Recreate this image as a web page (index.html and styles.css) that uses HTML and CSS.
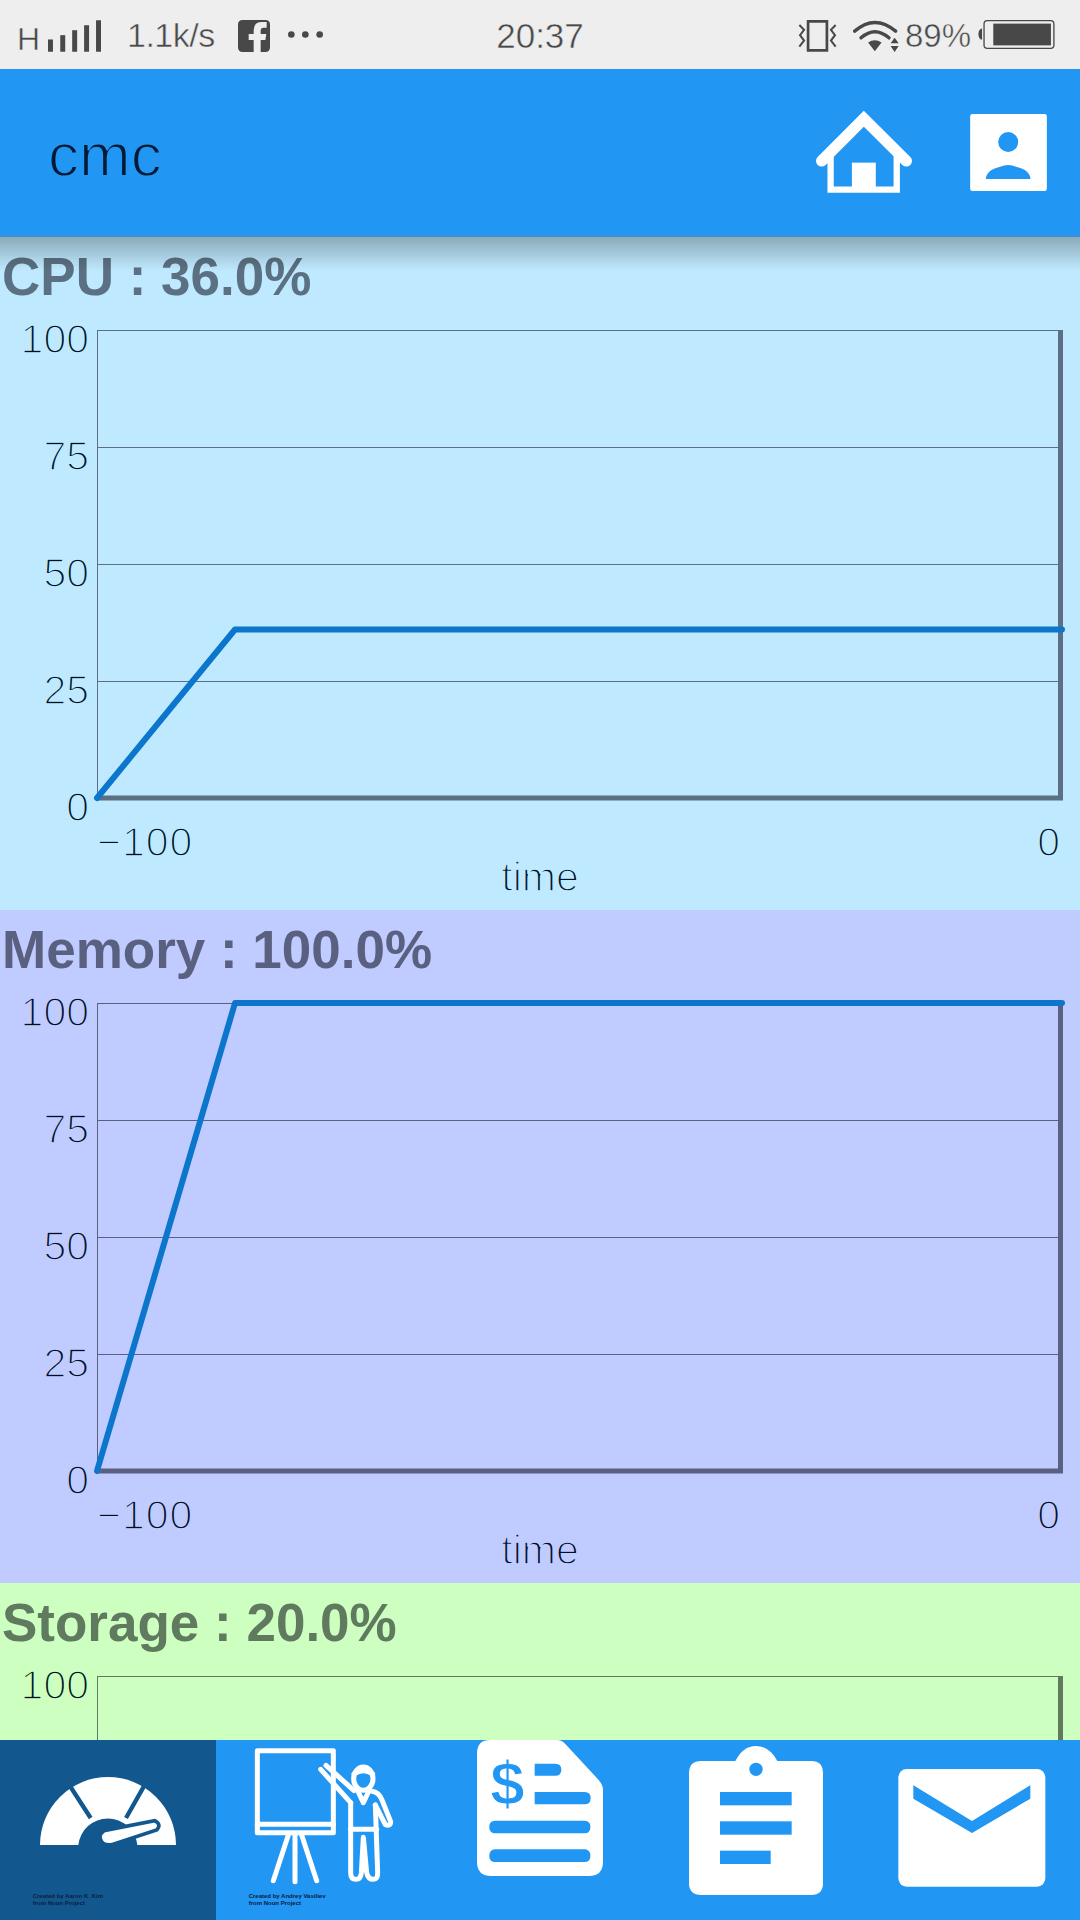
FILE: index.html
```html
<!DOCTYPE html>
<html lang="en">
<head>
<meta charset="utf-8">
<title>cmc</title>
<link rel="stylesheet" href="styles.css">
</head>
<body>
<div class="app">
  <div class="status">
    <div class="status-left">
      <span class="net">H</span>
      <svg class="ic-signal" viewBox="143 55 160 95"><rect x="143" y="113" width="15" height="37"/><rect x="180" y="100" width="15" height="50"/><rect x="216" y="85" width="15" height="65"/><rect x="252" y="70" width="15" height="80"/><rect x="288" y="55" width="15" height="95"/></svg>
      <span class="speed">1.1k/s</span>
      <svg class="ic-fb" viewBox="708 57 96 96"><path d="M722 57H790Q804 57 804 71V139Q804 153 790 153H776V117H790L793 99H776V89Q776 80 785 80H794V63H780Q755 63 755 88V99H740V117H755V153H722Q708 153 708 139V71Q708 57 722 57Z"/></svg>
      <svg class="ic-dots" viewBox="858 93 105 20"><circle cx="868" cy="103" r="10"/><circle cx="910" cy="103" r="10"/><circle cx="953" cy="103" r="10"/></svg>
    </div>
    <div class="clock">20:37</div>
    <div class="status-right">
      <svg class="ic-vib" viewBox="62 55 116 95"><path class="vib-o" d="M92 59H148V145H92Z"/><path class="vib-l" d="M66 70L80 84L68 100L80 116L66 134M174 70L160 84L172 100L160 116L174 134"/></svg>
      <svg class="ic-wifi" viewBox="225 55 137 95"><path class="wifi-l" d="M230 88Q290 36 352 88M249 108Q290 72 332 108"/><path d="M270 122Q290 108 310 122L290 148Z"/><path d="M349 108L361 124H337ZM349 150L337 132H361Z"/></svg>
      <span class="batt-pct">89%</span>
      <svg class="ic-batt" viewBox="597 58 231 88"><rect class="batt-o" x="614" y="60" width="212" height="84" rx="10"/><rect x="642" y="69" width="175" height="66"/><path d="M608 84V118Q597 116 597 101Q597 86 608 84Z"/></svg>
    </div>
  </div>

  <header class="bar">
    <h1 class="bar-title">cmc</h1>
    <div class="bar-actions">
      <svg class="ic-home" viewBox="105 65 295 250"><path class="home-roof" d="M125 217L252 90L380 217"/><path class="home-wall" d="M152 190V303H351V190"/><rect class="home-door" x="216" y="222" width="72" height="80"/></svg>
      <svg class="ic-user" viewBox="570 72 230 231"><rect class="user-bg" x="570" y="72" width="230" height="231" rx="7"/><circle class="user-fg" cx="684" cy="156" r="30"/><path class="user-fg" d="M617 267Q618 240 660 230Q684 220 708 230Q750 240 751 267Z"/></svg>
    </div>
  </header>

  <main class="content">
    <section class="panel panel-cpu">
      <h2 class="panel-title">CPU : 36.0%</h2>
      <svg class="chart" viewBox="0 -10 1080 603">
        <path class="grid" d="M97 13.5H1060M97 130.5H1060M97 247.5H1060M97 364.5H1060M97.5 13V481"/>
        <path class="axis" d="M1060.5 13V483M97 481H1063"/>
        <polyline class="series" points="97,481 235,312.5 1062,312.5"/>
        <g class="ylab"><text x="89" y="36">100</text><text x="89" y="153">75</text><text x="89" y="270">50</text><text x="89" y="387">25</text><text x="89" y="504">0</text></g>
        <text class="xlab wide" x="97" y="539">−100</text><text class="xlab end" x="1060" y="539">0</text><text class="xlab mid" x="540" y="574">time</text>
      </svg>
    </section>
    <section class="panel panel-mem">
      <h2 class="panel-title">Memory : 100.0%</h2>
      <svg class="chart" viewBox="0 -10 1080 603">
        <path class="grid" d="M97 13.5H1060M97 130.5H1060M97 247.5H1060M97 364.5H1060M97.5 13V481"/>
        <path class="axis" d="M1060.5 13V483M97 481H1063"/>
        <polyline class="series" points="97,481 235,13 1062,13"/>
        <g class="ylab"><text x="89" y="36">100</text><text x="89" y="153">75</text><text x="89" y="270">50</text><text x="89" y="387">25</text><text x="89" y="504">0</text></g>
        <text class="xlab wide" x="97" y="539">−100</text><text class="xlab end" x="1060" y="539">0</text><text class="xlab mid" x="540" y="574">time</text>
      </svg>
    </section>
    <section class="panel panel-sto">
      <h2 class="panel-title">Storage : 20.0%</h2>
      <svg class="chart" viewBox="0 -10 1080 603">
        <path class="grid" d="M97 13.5H1060M97 130.5H1060M97 247.5H1060M97 364.5H1060M97.5 13V481"/>
        <path class="axis" d="M1060.5 13V483M97 481H1063"/>
        <g class="ylab"><text x="89" y="36">100</text></g>
      </svg>
    </section>
  </main>

  <nav class="tabs">
    <div class="tab tab-active">
      <svg class="tab-ic" viewBox="0 30 648 540">
        <path class="w" d="M120 345A204 204 0 0 1 528 345H412A89 89 0 0 0 235 345Z"/>
        <path class="sep" d="M206 162L272 264M438 158L378 264"/>
        <path class="needle" d="M312 302L464 272Q486 283 470 300L335 344Q303 348 300 322Q300 310 312 302Z"/>
        <text class="credit" x="98" y="505">Created by Aaron K. Kim</text>
        <text class="credit" x="98" y="526">from Noun Project</text>
      </svg>
    </div>
    <div class="tab">
      <svg class="tab-ic" viewBox="648 30 648 540">
        <g class="line">
          <rect x="772" y="62" width="228" height="246"/>
          <path d="M772 283H1000"/>
          <path d="M865 315L820 452M885 315V455M905 315L950 452"/>
          <ellipse cx="1090" cy="146" rx="29" ry="35"/>
          <path d="M1062 132Q1090 112 1118 132M1072 180L1090 218L1108 180"/>
          <path d="M962 118L1052 218M978 106L1062 182"/>
          <path d="M1052 218V428Q1052 448 1068 448Q1082 448 1084 428L1090 322L1100 428Q1104 448 1120 448Q1134 448 1133 428L1126 225"/>
          <path d="M1116 184Q1136 186 1146 210L1172 275Q1172 290 1156 284L1126 225"/>
          <path d="M1052 298H1130"/>
        </g>
        <text class="credit" x="746" y="505">Created by Andrey Vasiliev</text>
        <text class="credit" x="746" y="526">from Noun Project</text>
      </svg>
    </div>
    <div class="tab">
      <svg class="tab-ic" viewBox="0 0 648 540">
        <path class="w" d="M135 40Q135 0 175 0H375Q390 0 400 12L500 120Q513 135 513 150V365Q513 408 470 408H178Q135 408 135 365Z"/>
        <text class="dollar" x="226" y="193">$</text>
        <path class="b" d="M308 71H370Q388 71 388 89Q388 107 370 107H308ZM308 156H458Q476 156 476 174Q476 193 458 193H308Z"/>
        <rect class="b" x="172" y="242" width="303" height="38" rx="16"/>
        <rect class="b" x="172" y="328" width="303" height="38" rx="16"/>
      </svg>
    </div>
    <div class="tab">
      <svg class="tab-ic" viewBox="0 0 648 540">
        <path class="w" d="M160 63H262Q285 18 324 18Q363 18 388 63H490Q525 63 525 100V430Q525 465 490 465H160Q123 465 123 430V100Q123 63 160 63Z"/>
        <circle class="b" cx="324" cy="88" r="20"/>
        <rect class="b" x="216" y="156" width="215" height="40"/>
        <rect class="b" x="216" y="244" width="215" height="40"/>
        <rect class="b" x="216" y="332" width="152" height="40"/>
      </svg>
    </div>
    <div class="tab">
      <svg class="tab-ic" viewBox="0 0 648 540">
        <rect class="w" x="103" y="87" width="441" height="353" rx="25"/>
        <polygon class="b" points="148,136 324,243 499,136 499,176 324,279 148,176"/>
      </svg>
    </div>
  </nav>
</div>
</body>
</html>
```

FILE: styles.css
```css
* { box-sizing: border-box; }
html, body { margin: 0; padding: 0; }
body { width: 1080px; height: 1920px; overflow: hidden; font-family: "Liberation Sans", Arial, sans-serif; }
.app { display: flex; flex-direction: column; width: 1080px; height: 1920px; overflow: hidden; }

.status { position: relative; flex: 0 0 69px; display: flex; align-items: center; justify-content: space-between; background: #eeeeee; color: #484848; fill: #484848; padding: 0 25px 0 17px; -webkit-text-stroke: .5px #eeeeee; }
.status-left { display: flex; align-items: center; }
.status-right { display: flex; align-items: center; }
.clock { position: absolute; left: 0; right: 0; top: 13px; text-align: center; font-size: 35px; line-height: 46px; }
.net { font-size: 32px; line-height: 40px; width: 31px; margin-top: 8px; }
.ic-signal { width: 53px; height: 32px; margin-top: 2px; }
.speed { font-size: 34px; letter-spacing: -.5px; line-height: 42px; margin-left: 26px; width: 90px; white-space: nowrap; }
.ic-fb { width: 32px; height: 32px; margin-left: 21px; margin-top: 2px; }
.ic-dots { width: 35px; height: 7px; margin-left: 18px; }
.ic-vib { width: 39px; height: 32px; margin-top: 2px; }
.vib-o { fill: none; stroke: #484848; stroke-width: 8; }
.vib-l { fill: none; stroke: #484848; stroke-width: 6; }
.ic-wifi { width: 46px; height: 32px; margin-left: 16px; margin-top: 2px; }
.wifi-l { fill: none; stroke: #484848; stroke-width: 10; stroke-linecap: round; }
.batt-pct { font-size: 33px; line-height: 42px; margin-left: 6px; margin-top: 2px; width: 68px; white-space: nowrap; }
.ic-batt { width: 77px; height: 29px; margin-left: 5px; }
.batt-o { fill: none; stroke: #484848; stroke-width: 4; }

.bar { position: relative; z-index: 2; flex: 0 0 168px; display: flex; align-items: center; justify-content: space-between; background: #2196f3; border-bottom: 2px solid #3a8fd2; padding: 0 33px 0 48px; }
.bar::after { content: ""; position: absolute; left: 0; right: 0; top: 100%; margin-top: 2px; height: 34px; background: linear-gradient(rgba(0,0,0,.27), rgba(0,0,0,0)); }
.bar-title { margin: 6px 0 0; font-weight: 400; font-size: 62px; line-height: 70px; color: #021a36; -webkit-text-stroke: 1.8px #2196f3; }
.bar-actions { display: flex; align-items: center; gap: 57px; }
.ic-home { width: 98px; height: 84px; }
.home-roof { fill: none; stroke: #fff; stroke-width: 34; stroke-linecap: round; stroke-linejoin: miter; }
.home-wall { fill: none; stroke: #fff; stroke-width: 19; }
.home-door { fill: #fff; }
.ic-user { width: 77px; height: 77px; }
.user-bg { fill: #fff; }
.user-fg { fill: #2196f3; }

.content { flex: 1 1 0; min-height: 0; overflow: hidden; }
.panel { height: 673px; overflow: hidden; background: var(--bg); }
.panel-cpu { --bg: #bfe9ff; --ink: #5b7082; }
.panel-mem { --bg: #c0cbff; --ink: #5a6180; }
.panel-sto { --bg: #ccffc0; --ink: #5f7a5e; }
.panel-title { margin: 0; padding: 10px 0 0 2px; height: 70px; font-size: 53px; line-height: 60px; font-weight: 700; color: var(--ink); white-space: nowrap; }
.chart { display: block; width: 1080px; height: 603px; }
.grid { fill: none; stroke: var(--ink); stroke-width: 1; }
.axis { fill: none; stroke: var(--ink); stroke-width: 5; }
.series { fill: none; stroke: #0b76cc; stroke-width: 6; stroke-linejoin: round; stroke-linecap: round; }
.ylab text, .xlab { font-size: 41px; fill: #00101f; stroke: var(--bg); stroke-width: 1.7px; }
.ylab text { text-anchor: end; }
.xlab.wide { letter-spacing: 1px; }
.xlab.end { text-anchor: end; }
.xlab.mid { text-anchor: middle; }

.tabs { flex: 0 0 180px; display: flex; background: #2196f3; }
.tab { flex: 1 1 0; }
.tab-active { background: #12588f; }
.tab-ic { display: block; width: 216px; height: 180px; overflow: hidden; }
.w { fill: #fff; }
.b { fill: #2196f3; }
.sep { fill: none; stroke: #12588f; stroke-width: 13; }
.needle { fill: #fff; stroke: #12588f; stroke-width: 11; }
.line { fill: none; stroke: #fff; stroke-width: 15; stroke-linecap: round; stroke-linejoin: round; }
.credit { font-weight: 700; font-size: 18px; fill: #08213f; }
.dollar { font-weight: 700; font-size: 185px; fill: #2196f3; stroke: #fff; stroke-width: 3px; text-anchor: middle; }
```
